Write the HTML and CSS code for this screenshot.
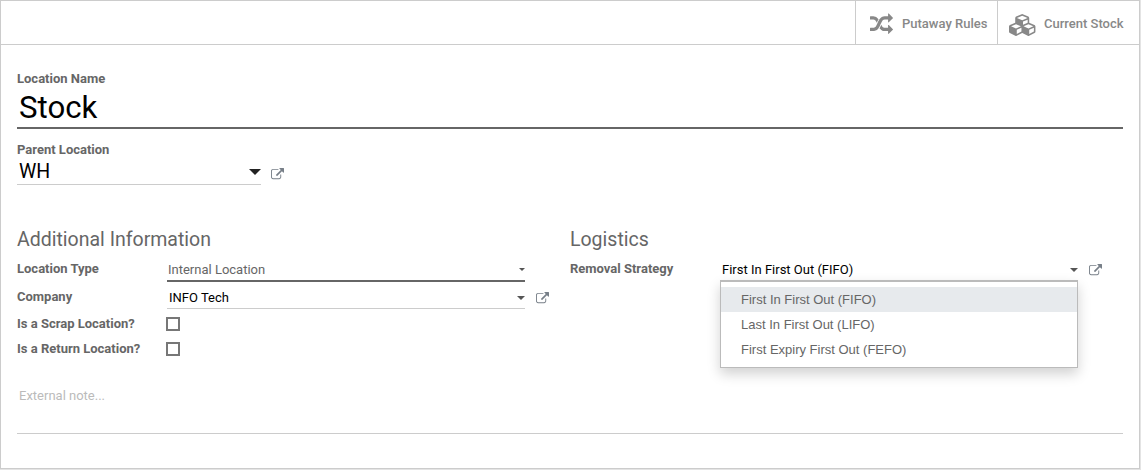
FILE: index.html
```
<!DOCTYPE html>
<html lang="en">

<head>
    <meta charset="UTF-8">
    <meta name="viewport" content="width=device-width, initial-scale=1.0">
    <title>Stock</title>
    <link rel="stylesheet" href="styles.css">
</head>

<body>
    <!-- shared icon -->
    <svg class="defs" width="0" height="0">
        <symbol id="external" viewBox="0 0 1792 1792">
            <path d="M1408 928v320q0 119-84.5 203.5t-203.5 84.5h-832q-119 0-203.5-84.5t-84.5-203.5v-832q0-119 84.5-203.5t203.5-84.5h704q14 0 23 9t9 23v64q0 14-9 23t-23 9h-704q-66 0-113 47t-47 113v832q0 66 47 113t113 47h832q66 0 113-47t47-113v-320q0-14 9-23t23-9h64q14 0 23 9t9 23zm384-864v512q0 26-19 45t-45 19-45-19l-176-176-652 652q-10 10-23 10t-23-10l-114-114q-10-10-10-23t10-23l652-652-176-176q-19-19-19-45t19-45 45-19h512q26 0 45 19t19 45z" />
        </symbol>
    </svg>

    <div class="sheet">
        <div class="button-box">
            <button class="stat stat-rules">
                <svg width="23" height="23" viewBox="0 0 1792 1792">
                    <path d="M666 481q-60 92-137 273-22-45-37-72.5t-40.5-63.5-51-56.5-63-35-81.5-14.5h-224q-14 0-23-9t-9-23v-192q0-14 9-23t23-9h224q250 0 410 225zm1126 799q0 14-9 23l-320 320q-9 9-23 9-13 0-22.5-9.5t-9.5-22.5v-192q-32 0-85 .5t-81 1-73-1-71-5-64-10.5-63-18.5-58-28.5-59-40-55-53.5-56-69.5q59-93 136-273 22 45 37 72.5t40.5 63.5 51 56.5 63 35 81.5 14.5h256v-192q0-14 9-23t23-9q12 0 24 10l319 319q9 9 9 23zm0-896q0 14-9 23l-320 320q-9 9-23 9-13 0-22.5-9.5t-9.5-22.5v-192h-256q-48 0-87 15t-69 45-51 61.5-45 77.5q-32 62-78 171-29 66-49.5 111t-54 105-64 100-74 83-90 68.5-106.5 42-128 16.5h-224q-14 0-23-9t-9-23v-192q0-14 9-23t23-9h224q48 0 87-15t69-45 51-61.5 45-77.5q32-62 78-171 29-66 49.5-111t54-105 64-100 74-83 90-68.5 106.5-42 128-16.5h256v-192q0-14 9-23t23-9q12 0 24 10l319 319q9 9 9 23z" />
                </svg>
                <span>Putaway Rules</span>
            </button>
            <button class="stat stat-stock">
                <svg width="28" height="22" viewBox="0 0 2304 1792">
                    <path d="M640 1632l384-192v-314l-384 164v342zm-64-454l404-173-404-173-404 173zm1088 454l384-192v-314l-384 164v342zm-64-454l404-173-404-173-404 173zm-448-293l384-165v-266l-384 164v267zm-64-379l441-189-441-189-441 189zm1088 518v416q0 36-19 67t-52 47l-448 224q-25 14-57 14t-57-14l-448-224q-4-2-7-4-2 2-7 4l-448 224q-25 14-57 14t-57-14l-448-224q-33-16-52-47t-19-67v-416q0-38 21.5-70t56.5-48l434-186v-400q0-38 21.5-70t56.5-48l448-192q23-10 50-10t50 10l448 192q35 16 56.5 48t21.5 70v400l434 186q36 16 57 48t21 70z" />
                </svg>
                <span>Current Stock</span>
            </button>
        </div>

        <div class="content">
            <div class="title">
                <label>Location Name</label>
                <div class="name">Stock</div>
                <label>Parent Location</label>
                <div class="line">
                    <div class="parent">WH<i class="caret"></i></div>
                    <svg class="link"><use href="#external" /></svg>
                </div>
            </div>

            <div class="groups">
                <div class="group">
                    <h2>Additional Information</h2>
                    <div class="row">
                        <label>Location Type</label>
                        <div class="input select">Internal Location<i class="caret"></i></div>
                    </div>
                    <div class="row row-company">
                        <label>Company</label>
                        <div class="input">INFO Tech<i class="caret"></i></div>
                        <svg class="link"><use href="#external" /></svg>
                    </div>
                    <div class="row row-check">
                        <label>Is a Scrap Location?</label>
                        <span class="check"></span>
                    </div>
                    <div class="row row-check">
                        <label>Is a Return Location?</label>
                        <span class="check"></span>
                    </div>
                </div>

                <div class="group">
                    <h2>Logistics</h2>
                    <div class="row">
                        <label>Removal Strategy</label>
                        <div class="input strategy">First In First Out (FIFO)<i class="caret"></i>
                            <ul class="menu">
                                <li class="active">First In First Out (FIFO)</li>
                                <li>Last In First Out (LIFO)</li>
                                <li>First Expiry First Out (FEFO)</li>
                            </ul>
                        </div>
                        <svg class="link"><use href="#external" /></svg>
                    </div>
                </div>
            </div>

            <div class="note">External note...</div>
        </div>
    </div>
</body>

</html>
```

FILE: styles.css
```
* {
    box-sizing: border-box;
}

html,
body,
ul,
h2 {
    margin: 0;
    padding: 0;
}

body {
    height: 470px;
    overflow: hidden;
    background-color: #e4e4e4;
    font-family: Roboto, "Liberation Sans", sans-serif;
    font-size: 13px;
    line-height: 20px;
    color: #666;
}

.defs {
    display: block;
}

.sheet {
    width: 1140px;
    height: 469px;
    border: 1px solid #ccc;
    background-color: #fff;
}

/* top buttons */
.button-box {
    display: flex;
    justify-content: flex-end;
    height: 44px;
    border-bottom: 1px solid #ccc;
}

.stat {
    display: flex;
    align-items: center;
    height: 43px;
    padding: 2px 0 0;
    border: 0;
    border-left: 1px solid #ccc;
    background: none;
    font: 500 13px Roboto, sans-serif;
    color: #888;
    fill: #888;
}

.stat svg {
    margin-top: 2px;
}

.stat-rules {
    width: 142px;
    padding-left: 14px;
    gap: 9px;
}

.stat-stock {
    width: 142px;
    padding-left: 11px;
    gap: 7px;
}

.content {
    padding: 24px 16px 0;
}

label {
    display: block;
    font-weight: 700;
}

.name {
    height: 40px;
    margin-bottom: 11px;
    padding-left: 2px;
    border-bottom: 2px solid #666;
    font-size: 31.2px;
    line-height: 37px;
    color: #000;
}

.line,
.row {
    display: flex;
}

.parent {
    display: flex;
    justify-content: space-between;
    width: 244px;
    height: 25px;
    padding-left: 2px;
    border-bottom: 1px solid #ccc;
    font-size: 19.5px;
    line-height: 23px;
    color: #000;
}

.caret {
    width: 0;
    height: 0;
    border: 4px solid transparent;
    border-top-color: #555;
    border-bottom: 0;
}

.parent .caret {
    margin-top: 9px;
    border-width: 6px 6px 0;
    border-top-color: #222;
}

.link {
    width: 13px;
    height: 13px;
    margin: 8px 0 0 10px;
    fill: #777f88;
}

/* groups */
.groups {
    display: flex;
    height: 158px;
    margin-top: 42px;
}

.group {
    width: 553px;
}

h2 {
    height: 32px;
    font-size: 19.5px;
    font-weight: 400;
    line-height: 26px;
}

.row {
    height: 28px;
}

.row label {
    width: 150px;
}

.input {
    display: flex;
    justify-content: space-between;
    width: 358px;
    height: 23px;
    padding-left: 2px;
    border-bottom: 1px solid #ccc;
    line-height: 22px;
    color: #000;
}

.input .caret {
    margin-top: 9px;
}

.select {
    padding-left: 1px;
    border-bottom: 2px solid #666;
    color: #666;
}

.select .caret {
    border-width: 3px 3px 0;
}

.row-company {
    height: 27px;
}

.row-company .input {
    height: 22px;
}

.row-check {
    height: 25px;
}

.row-check label {
    width: 149px;
}

.check {
    width: 14px;
    height: 14px;
    margin-top: 3px;
    border: 2px solid #777;
}

.row .link {
    margin: 5px 0 0 11px;
}

.strategy {
    position: relative;
    border-bottom: 2px solid #666;
}

/* dropdown */
.menu {
    position: absolute;
    top: 21px;
    left: 0;
    width: 358px;
    height: 88px;
    padding-top: 5px;
    border: 1px solid #bbb;
    border-top: 2px solid #bbb;
    background-color: #fff;
    box-shadow: 0 6px 12px rgba(0, 0, 0, .18);
    list-style: none;
    font-family: "Liberation Sans", sans-serif;
    color: #666;
}

.menu li {
    height: 25px;
    padding-left: 20px;
    line-height: 25px;
}

.menu .active {
    background-color: #e7eaed;
}

.note {
    height: 49px;
    padding-left: 2px;
    border-bottom: 1px solid #ccc;
    line-height: 22px;
    color: #bbb;
}
```
